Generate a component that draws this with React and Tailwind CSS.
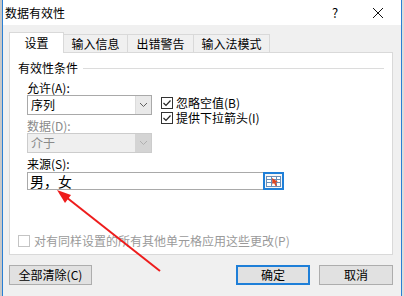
import React from 'react';

const font = { fontFamily: '"Noto Sans CJK SC", "Noto Sans", sans-serif' };

function Check({ checked, disabled }) {
  return (
    <span
      className={`w-[12px] h-[12px] shrink-0 border flex items-center justify-center bg-white ${
        disabled ? 'border-[#c4c4c4]' : 'border-[#333]'
      }`}
    >
      {checked && (
        <svg width="10" height="10" viewBox="0 0 10 10">
          <path d="M1.5 5 L4 7.5 L8.5 2.5" stroke="#222" strokeWidth="1.2" fill="none" />
        </svg>
      )}
    </span>
  );
}

function Chevron({ color }) {
  return (
    <svg width="9" height="6" viewBox="0 0 9 6">
      <path d="M1 1 L4.5 4.5 L8 1" stroke={color} strokeWidth="1" fill="none" />
    </svg>
  );
}

function Select({ value, disabled }) {
  return (
    <div
      className={`w-[125px] h-[20px] border flex ${
        disabled ? 'border-[#cccccc] bg-[#efefef]' : 'border-[#a9a9a9] bg-white'
      }`}
    >
      <span
        className={`flex-1 pl-[3px] text-[12px] leading-[18px] ${
          disabled ? 'text-[#8a8a8a]' : 'text-black'
        }`}
      >
        {value}
      </span>
      <span
        className={`w-[16px] flex items-center justify-center ${
          disabled ? 'bg-[#d4d4d4]' : 'bg-[#e9e9e9] border-l border-[#dcdcdc]'
        }`}
      >
        <Chevron color={disabled ? '#b0b0b0' : '#606060'} />
      </span>
    </div>
  );
}

function RangeIcon() {
  return (
    <span className="w-[21px] h-[18px] border-2 border-[#1f7fd8] flex items-center justify-center bg-[#f6f6f6]">
      <svg width="15" height="11" viewBox="0 0 15 11">
        <rect x="0.5" y="0.5" width="14" height="10" fill="#fff" stroke="#6b8fb8" />
        <line x1="0.5" y1="3.5" x2="14.5" y2="3.5" stroke="#6b8fb8" />
        <line x1="0.5" y1="6.5" x2="14.5" y2="6.5" stroke="#6b8fb8" />
        <line x1="5.5" y1="0.5" x2="5.5" y2="10.5" stroke="#6b8fb8" />
        <line x1="10.5" y1="0.5" x2="10.5" y2="10.5" stroke="#6b8fb8" />
        <path d="M6 2 L12 6 L9.5 6.5 L11 9.5 L9.5 10 L8 7 L6.5 8.5 Z" fill="#e0451f" />
      </svg>
    </span>
  );
}

function Button({ children, primary }) {
  return (
    <div
      className={`h-[20px] flex items-center justify-center text-[12px] text-black bg-[#e1e1e1] ${
        primary ? 'border-2 border-[#1f7fd8]' : 'border border-[#adadad]'
      }`}
    >
      {children}
    </div>
  );
}

export default function App() {
  return (
    <div className="w-[404px] h-[296px] bg-[#e6e6e6] relative overflow-hidden flex" style={font}>
      <div className="w-[2px] bg-[#c8c8c8]" />
      <div className="w-[400px] border-x border-[#2a7fd4] bg-[#f0f0f0] flex flex-col">
        {/* title bar */}
        <div className="h-[25px] bg-white flex items-center pl-[2px] pr-[17px]">
          <span className="text-[12px] text-black flex-1 leading-none">数据有效性</span>
          <span className="text-[13px] text-black w-[10px] leading-none">?</span>
          <svg width="12" height="12" viewBox="0 0 12 12" className="ml-[30px]">
            <path d="M1 1 L11 11 M11 1 L1 11" stroke="#111" strokeWidth="1" />
          </svg>
        </div>

        <div className="pl-[6px] pr-[8px] mt-[7px]">
          {/* tabs */}
          <div className="flex items-end h-[20px] text-[12px] text-black">
            <div className="w-[55px] h-[21px] bg-white border border-b-0 border-[#d9d9d9] flex items-center justify-center relative z-10 -mb-px">
              设置
            </div>
            <div className="w-[64px] h-[18px] border border-l-0 border-b-0 border-[#d9d9d9] flex items-center justify-center">
              输入信息
            </div>
            <div className="w-[66px] h-[18px] border border-l-0 border-b-0 border-[#d9d9d9] flex items-center justify-center">
              出错警告
            </div>
            <div className="w-[76px] h-[18px] border border-l-0 border-b-0 border-[#d9d9d9] flex items-center justify-center">
              输入法模式
            </div>
          </div>

          {/* panel */}
          <div className="h-[203px] bg-white border border-[#d9d9d9] pl-[8px] pt-[8px] text-[12px] text-black">
            <div className="flex items-center h-[14px]">
              <span className="leading-none">有效性条件</span>
              <span className="flex-1 h-px bg-[#dcdcdc] ml-[5px] mr-[8px]" />
            </div>
            <div className="pl-[9px]">
              <div className="flex mt-[5px]">
                <div className="flex flex-col w-[134px]">
                  <span className="h-[15px] leading-[15px]">允许(A):</span>
                  <Select value="序列" />
                  <span className="h-[15px] leading-[15px] mt-[3px] text-[#8a8a8a]">数据(D):</span>
                  <Select value="介于" disabled />
                </div>
                <div className="flex flex-col gap-[3px] mt-[17px]">
                  <div className="flex items-center h-[12px] gap-[3px]">
                    <Check checked />
                    <span className="leading-none">忽略空值(B)</span>
                  </div>
                  <div className="flex items-center h-[12px] gap-[3px]">
                    <Check checked />
                    <span className="leading-none">提供下拉箭头(I)</span>
                  </div>
                </div>
              </div>
              <div className="h-[15px] leading-[15px] mt-[3px]">来源(S):</div>
              <div className="w-[257px] h-[18px] border border-[#a9a9a9] flex mt-[1px]">
                <span className="flex-1 pl-[2px] text-[14px] leading-[16px]">男，女</span>
                <div className="-mt-px -mr-px">
                  <RangeIcon />
                </div>
              </div>
            </div>
            <div className="flex items-center gap-[4px] mt-[45px] text-[#9a9a9a]">
              <Check disabled />
              <span className="leading-none">对有同样设置的所有其他单元格应用这些更改(P)</span>
            </div>
          </div>

          {/* buttons */}
          <div className="flex mt-[10px]">
            <div className="w-[83px]">
              <Button>全部清除(C)</Button>
            </div>
            <div className="flex-1" />
            <div className="w-[74px]">
              <Button primary>确定</Button>
            </div>
            <div className="w-[74px] ml-[9px]">
              <Button>取消</Button>
            </div>
          </div>
        </div>
      </div>
      <div className="flex-1 bg-[#dcdcdc]" />

      {/* red annotation arrow */}
      <svg className="absolute inset-0 pointer-events-none" width="404" height="296">
        <line x1="160" y1="271" x2="66" y2="197" stroke="#ee1c1c" strokeWidth="2" />
        <polygon points="57,190 71,195 65,203" fill="#ee1c1c" />
      </svg>
    </div>
  );
}
